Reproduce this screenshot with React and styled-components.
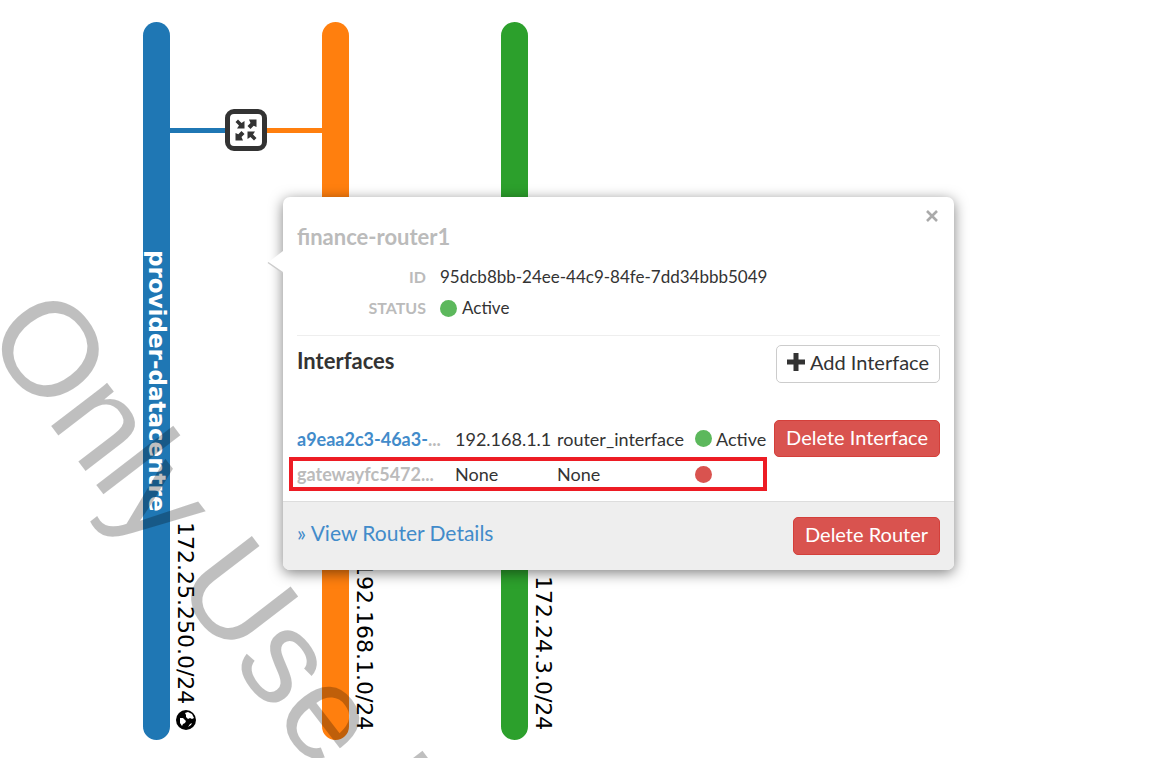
import React from "react";
import styled, { createGlobalStyle } from "styled-components";

const Global = createGlobalStyle`
  *, *::before, *::after { box-sizing: border-box; }
  body {
    margin: 0;
    background: #fff;
    color: #333;
    font: 18px/24px Lato, "Liberation Sans", sans-serif;
  }
  h2, h3, dl, dd, p { margin: 0; }
`;

const Page = styled.main`
  position: relative;
  min-height: 100vh;
  overflow: hidden;
  display: flex;
`;

const Topology = styled.section`
  flex: 1;
  display: flex;
  gap: 152px;
  padding: 22px 0 18px 143px;
`;

const Network = styled.div`
  position: relative;
  flex: none;
  width: 27px;
  display: flex;
`;

const Bar = styled.div`
  flex: 1;
  display: flex;
  align-items: center;
  justify-content: center;
  border-radius: 14px;
  background: ${(p) => p.$color};
`;

const NetworkName = styled.span`
  writing-mode: vertical-rl;
  color: #fff;
  font: bold 23px/27px "DejaVu Sans", sans-serif;
`;

const Cidr = styled.div`
  position: absolute;
  left: 100%;
  bottom: 10px;
  display: flex;
  align-items: center;
  gap: 6px;
  padding-left: 3px;
  writing-mode: vertical-rl;
  white-space: nowrap;
  color: #000;
  font: 22px/25px "DejaVu Sans", sans-serif;
`;

const RouterLink = styled.div`
  position: absolute;
  top: 87px;
  left: 100%;
  width: 152px;
  display: flex;
  align-items: center;
`;

const Wire = styled.span`
  flex: 1;
  height: 5px;
  background: ${(p) => p.$color};
`;

const RouterNode = styled.button`
  display: flex;
  align-items: center;
  justify-content: center;
  width: 42px;
  height: 42px;
  padding: 0;
  border: 5px solid #333;
  border-radius: 9px;
  background: #fff;
`;

const Popover = styled.article`
  position: absolute;
  top: 197px;
  left: 283px;
  width: 671px;
  border-radius: 7px;
  background: #fff;
  box-shadow: 0 3px 14px rgba(0, 0, 0, 0.5);
`;

const Arrow = styled.svg`
  position: absolute;
  top: 53px;
  right: 100%;
`;

const Close = styled.button`
  position: absolute;
  top: 9px;
  right: 12px;
  display: flex;
  align-items: center;
  justify-content: center;
  width: 20px;
  height: 20px;
  padding: 0;
  border: 0;
  background: none;
`;

const Content = styled.div`
  padding: 26px 14px 10px;
`;

const Title = styled.h2`
  color: #bbb;
  font-size: 22px;
  line-height: 28px;
`;

const Facts = styled.dl`
  display: grid;
  grid-template-columns: 129px 1fr;
  gap: 7px 14px;
  padding: 14px 0 15px;
  border-bottom: 1px solid #eee;
  font-size: 17px;
`;

const Term = styled.dt`
  color: #bbb;
  font-size: 16px;
  font-weight: bold;
  text-align: right;
`;

const Value = styled.dd`
  display: flex;
  align-items: center;
  gap: 5px;
`;

const Dot = styled.i`
  flex: none;
  width: 17px;
  height: 17px;
  border-radius: 50%;
  background: ${(p) => (p.$down ? "#d9534f" : "#5cb85c")};
`;

const SectionHead = styled.div`
  display: flex;
  justify-content: space-between;
  align-items: flex-start;
  padding: 9px 0 37px;
`;

const Heading = styled.h3`
  font-size: 22px;
  line-height: 32px;
`;

const Button = styled.button`
  display: inline-flex;
  align-items: center;
  gap: 5px;
  height: ${(p) => (p.$compact ? "37px" : "38px")};
  padding: 0 ${(p) => (p.$danger ? "11px" : "10px")} 4px;
  border: 1px solid ${(p) => (p.$danger ? "#d43f3a" : "#ccc")};
  border-radius: 5px;
  background: ${(p) => (p.$danger ? "#d9534f" : "#fff")};
  color: ${(p) => (p.$danger ? "#fff" : "#333")};
  font: 20px/24px Lato, "Liberation Sans", sans-serif;
  white-space: nowrap;
`;

const Interfaces = styled.table`
  width: 100%;
  table-layout: fixed;
  border-collapse: collapse;
`;

const Col = styled.col`
  width: ${(p) => p.$w}px;
`;

const Row = styled.tr`
  position: relative;
  height: 37px;
  ${(p) =>
    p.$marked &&
    `height: 34px;
    &::after {
      content: "";
      position: absolute;
      inset: 0 173px 0 -8px;
      border: 4px solid #ed1c24;
    }`}
`;

const NameCell = styled.th`
  padding: 0;
  color: #bbb;
  text-align: left;
`;

const Cell = styled.td`
  padding: 0;
  white-space: nowrap;
`;

const ActionCell = styled(Cell)`
  display: flex;
  justify-content: flex-end;
`;

const Link = styled.a`
  color: #428bca;
  text-decoration: none;
`;

const DetailsLink = styled(Link)`
  font-size: 21px;
  line-height: 32px;
`;

const Status = styled.span`
  display: flex;
  align-items: center;
  gap: 4px;
`;

const Footer = styled.footer`
  display: flex;
  justify-content: space-between;
  align-items: flex-start;
  padding: 15px 14px;
  border-top: 1px solid #ddd;
  border-radius: 0 0 7px 7px;
  background: #eee;
`;

const Watermark = styled.div`
  position: absolute;
  top: 336px;
  left: -18px;
  height: 0;
  pointer-events: none;
  white-space: nowrap;
  color: rgba(0, 0, 0, 0.25);
  font: 134px/0 "Liberation Sans", sans-serif;
  transform: rotate(52.5deg);
  transform-origin: 0 0;

  span {
    display: block;
    margin-top: -46px;
  }
`;

const BLUE = "#1f77b4";
const ORANGE = "#ff7f0e";
const GREEN = "#2ca02c";

function RouterIcon() {
  return (
    <svg width="22" height="22" viewBox="0 0 22 22" fill="#333" aria-hidden="true">
      <path d="M3 .5L.5 3L4 6.500L2 9.500H9.500V2L6.500 4Z" />
      <path d="M21.500 .5V8L18.700 6.800L15.500 10L12.500 7L15.500 4L14 .5Z" />
      <path d="M.5 21.500V14L3.300 15.200L6.500 12L9.500 15L6.500 18L8 21.500Z" />
      <path d="M19 21.500L21.500 19L18 15.500L20 12.500H12.500V20L15.500 18Z" />
    </svg>
  );
}

function Globe() {
  return (
    <svg width="20" height="20" viewBox="0 0 20 20" aria-hidden="true">
      <circle cx="10" cy="10" r="10" fill="#000" />
      <path
        fill="#fff"
        d="M9 3L12 2L16 4L18 8L16 9L14 8L12 9L10 7L10 5ZM4 8L7 8L10 11L9 13L7 14L6 16L4 13ZM14 14L16 13L15 15L12 17Z"
      />
    </svg>
  );
}

export default function App() {
  return (
    <>
      <Global />
      <Page>
        <Topology aria-label="Network topology">
          <Network>
            <Bar $color={BLUE}>
              <NetworkName>provider-datacentre</NetworkName>
            </Bar>
            <Cidr>
              172.25.250.0/24
              <Globe />
            </Cidr>
            <RouterLink>
              <Wire $color={BLUE} />
              <RouterNode aria-label="Router">
                <RouterIcon />
              </RouterNode>
              <Wire $color={ORANGE} />
            </RouterLink>
          </Network>
          <Network>
            <Bar $color={ORANGE} />
            <Cidr>192.168.1.0/24</Cidr>
          </Network>
          <Network>
            <Bar $color={GREEN} />
            <Cidr>172.24.3.0/24</Cidr>
          </Network>
        </Topology>

        <Popover>
          <Arrow width="16" height="24" viewBox="0 0 16 24" aria-hidden="true">
            <path d="M16 1L1 12.500L16 23Z" fill="#fff" />
            <path d="M1 12.500L16 23" stroke="#ccc" strokeWidth="1.500" />
          </Arrow>
          <Close aria-label="Close">
            <svg width="12" height="12" viewBox="0 0 12 12" aria-hidden="true">
              <path d="M1 1L11 11M11 1L1 11" stroke="#aaa" strokeWidth="2.600" />
            </svg>
          </Close>
          <Content>
            <Title>finance-router1</Title>
            <Facts>
              <Term>ID</Term>
              <Value>95dcb8bb-24ee-44c9-84fe-7dd34bbb5049</Value>
              <Term>STATUS</Term>
              <Value>
                <Dot />
                Active
              </Value>
            </Facts>
            <SectionHead>
              <Heading>Interfaces</Heading>
              <Button>
                <svg width="18" height="18" viewBox="0 0 18 18" aria-hidden="true">
                  <path d="M9 0V18M0 9H18" stroke="#333" strokeWidth="5" />
                </svg>
                Add Interface
              </Button>
            </SectionHead>
            <Interfaces>
              <colgroup>
                <Col $w={158} />
                <Col $w={102} />
                <Col $w={138} />
                <Col $w={79} />
                <Col $w={166} />
              </colgroup>
              <tbody>
                <Row>
                  <NameCell scope="row">
                    <Link href="#interface">a9eaa2c3-46a3-</Link>...
                  </NameCell>
                  <Cell>192.168.1.1</Cell>
                  <Cell>router_interface</Cell>
                  <Cell>
                    <Status>
                      <Dot />
                      Active
                    </Status>
                  </Cell>
                  <ActionCell>
                    <Button $danger $compact>
                      Delete Interface
                    </Button>
                  </ActionCell>
                </Row>
                <Row $marked>
                  <NameCell scope="row">gatewayfc5472...</NameCell>
                  <Cell>None</Cell>
                  <Cell>None</Cell>
                  <Cell>
                    <Status>
                      <Dot $down />
                    </Status>
                  </Cell>
                  <Cell />
                </Row>
              </tbody>
            </Interfaces>
          </Content>
          <Footer>
            <DetailsLink href="#router">» View Router Details</DetailsLink>
            <Button $danger>Delete Router</Button>
          </Footer>
        </Popover>
        <Watermark aria-hidden="true">
          <span>Only Use by</span>
        </Watermark>
      </Page>
    </>
  );
}
